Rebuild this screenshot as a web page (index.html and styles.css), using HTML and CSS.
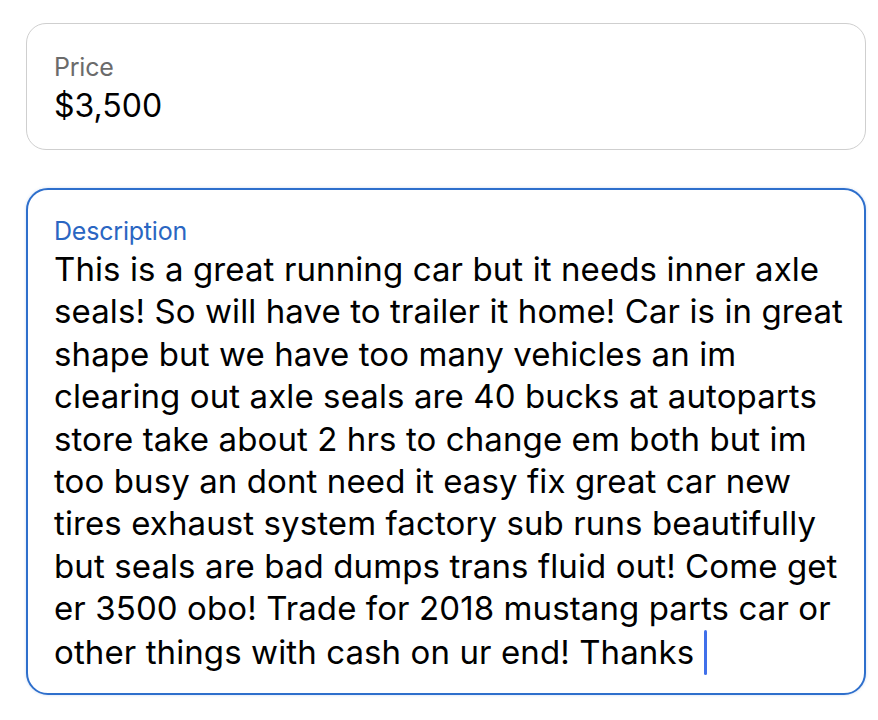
FILE: index.html
```html
<!DOCTYPE html>
<html>
<head>
<meta charset="utf-8">
<link rel="stylesheet" href="styles.css">
</head>
<body>
<div class="page">
  <div class="field price">
    <div class="label">Price</div>
    <div class="value">$3,500</div>
  </div>
  <div class="field desc">
    <div class="label label-active">Description</div>
    <div class="text">
      <div class="line">This is a great running car but it needs inner axle</div>
      <div class="line">seals! So will have to trailer it home! Car is in great</div>
      <div class="line">shape but we have too many vehicles an im</div>
      <div class="line">clearing out axle seals are 40 bucks at autoparts</div>
      <div class="line">store take about 2 hrs to change em both but im</div>
      <div class="line">too busy an dont need it easy fix great car new</div>
      <div class="line">tires exhaust system factory sub runs beautifully</div>
      <div class="line">but seals are bad dumps trans fluid out! Come get</div>
      <div class="line">er 3500 obo! Trade for 2018 mustang parts car or</div>
      <div class="line">other things with cash on ur end! Thanks<span class="caret"></span></div>
    </div>
  </div>
</div>
</body>
</html>
```
FILE: styles.css
```css
html, body {
  margin: 0;
  padding: 0;
  background: #ffffff;
}
body {
  font-family: "Inter", "Liberation Sans", sans-serif;
  color: #000;
}
.page {
  width: 878px;
  height: 720px;
  box-sizing: border-box;
  padding: 23px 12px 0 26px;
  display: flex;
  flex-direction: column;
  gap: 38px;
}
.field {
  box-sizing: border-box;
  width: 840px;
  background: #fff;
}
.price {
  height: 127px;
  border: 1.5px solid #cfcfcf;
  border-radius: 20px;
  padding: 28px 0 0 27px;
}
.label {
  font-size: 25px;
  color: #6b6b6b;
  line-height: 30px;
  letter-spacing: -0.2px;
}
.value {
  font-size: 32px;
  line-height: 40px;
  margin-top: 4px;
  letter-spacing: 0;
}
.desc {
  height: 507px;
  border: 2px solid #2e6fcc;
  border-radius: 22px;
  padding: 26px 0 0 26px;
  box-shadow: 0 0 3px rgba(46, 111, 204, 0.25);
}
.label-active {
  color: #2a66c2;
}
.text {
  font-size: 33px;
  line-height: 42.4px;
  margin-top: 2px;
  letter-spacing: 0.1px;
}
.line {
  white-space: nowrap;
}
.caret {
  display: inline-block;
  width: 3px;
  height: 45px;
  background: #4070ea;
  vertical-align: -11px;
  margin-left: 10px;
  border-radius: 1.5px;
}
```
